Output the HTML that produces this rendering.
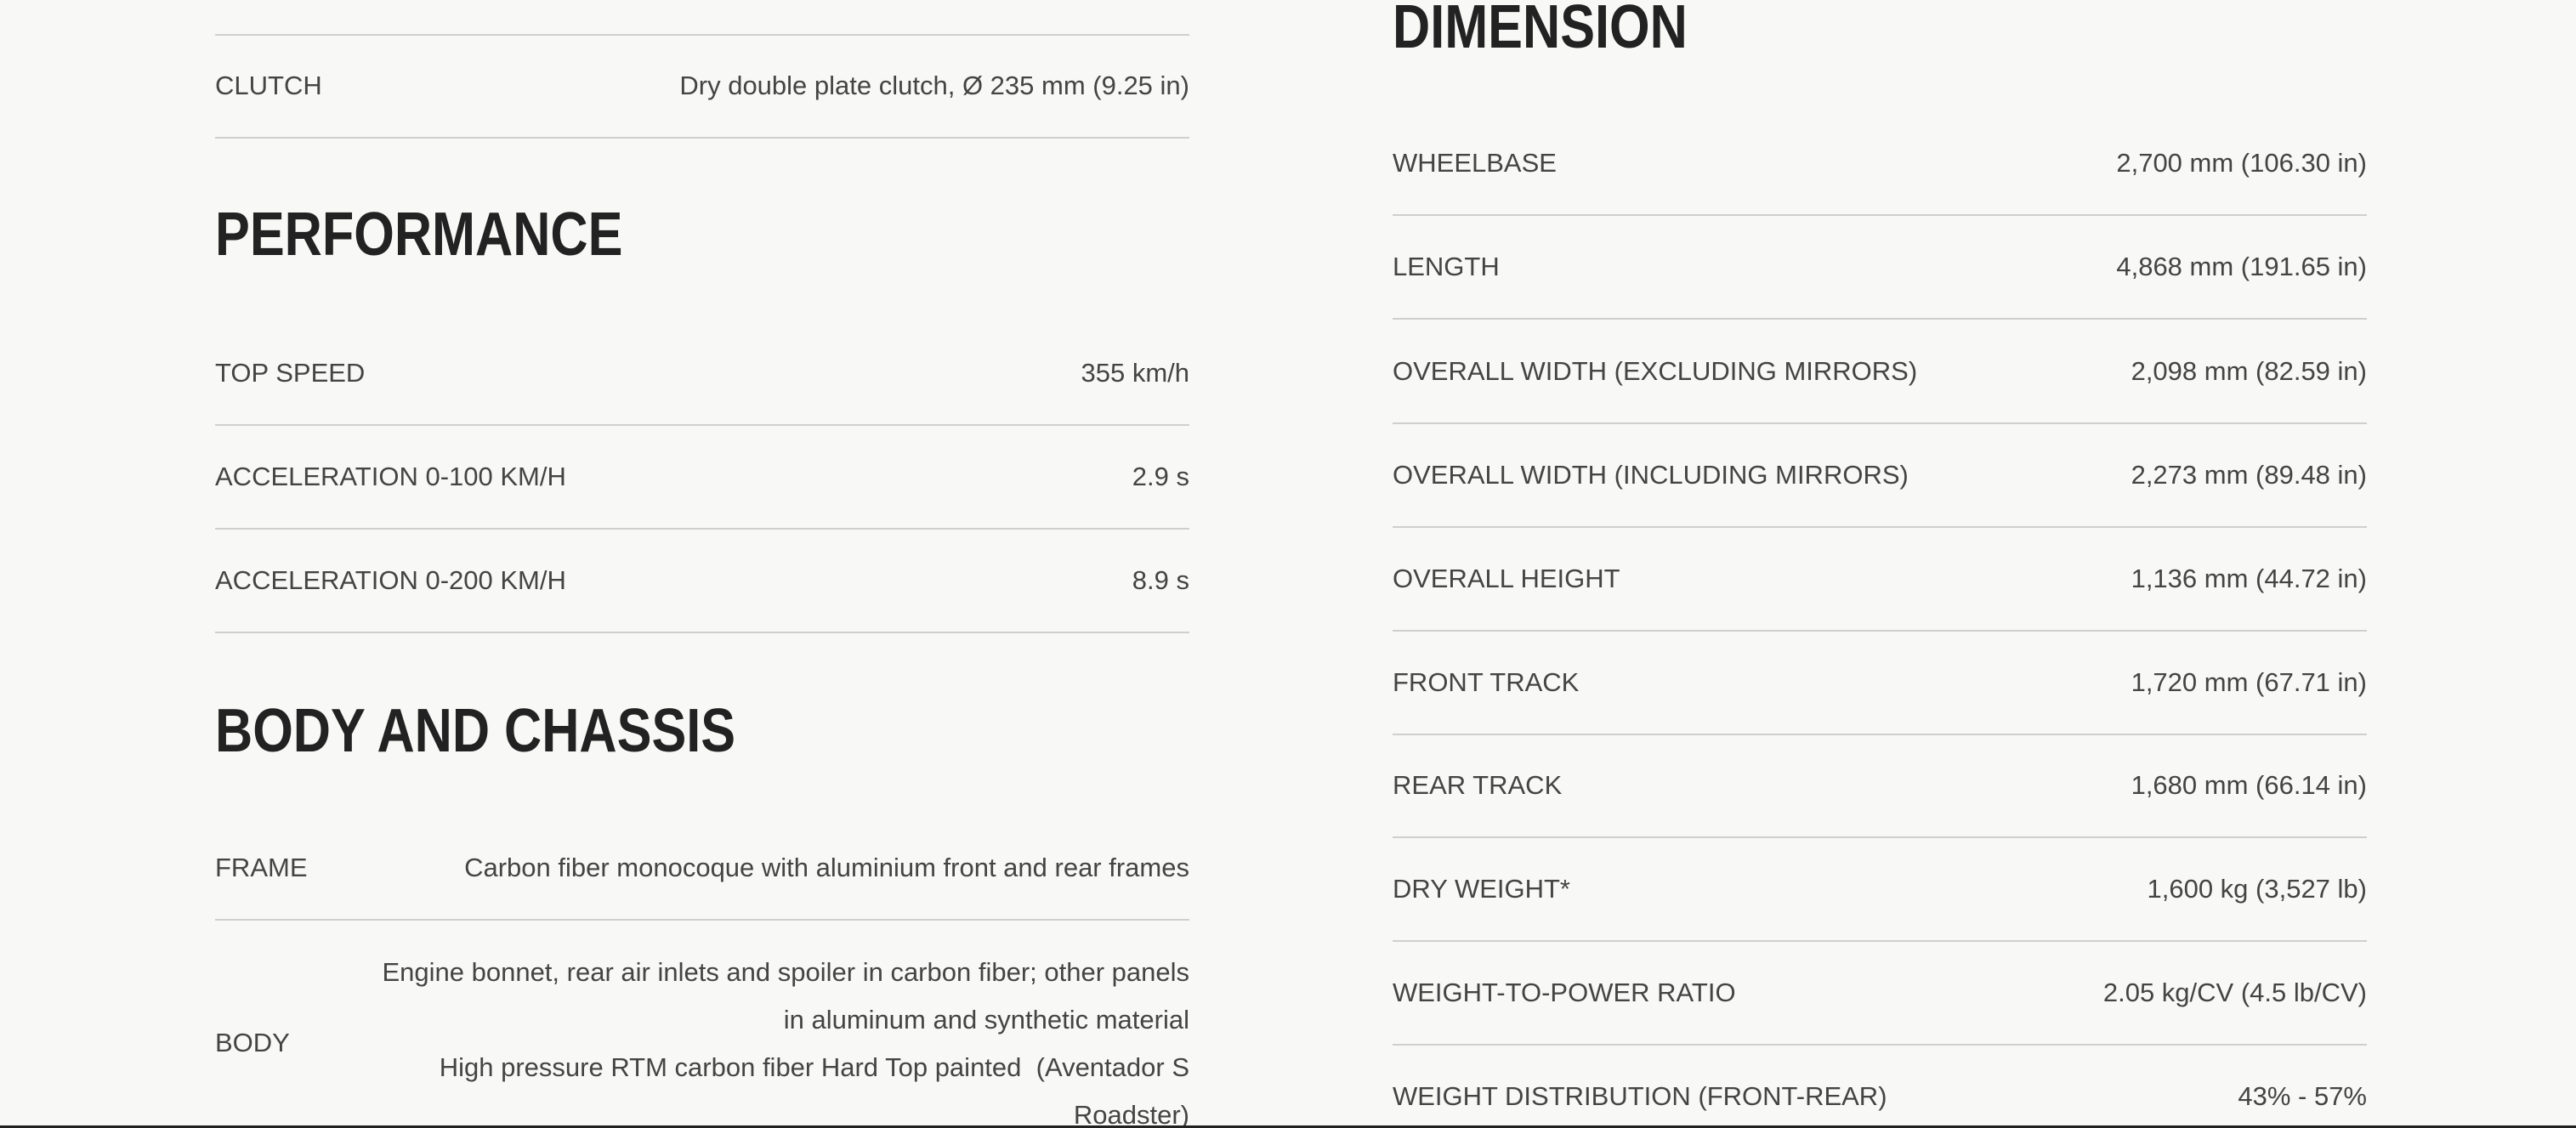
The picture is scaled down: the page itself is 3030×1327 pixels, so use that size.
<!DOCTYPE html>
<html><head><meta charset="utf-8"><style>
html,body{margin:0;padding:0;width:3030px;height:1327px;overflow:hidden;}
body{background:#f8f8f6;position:relative;font-family:"Liberation Sans",sans-serif;color:#444;}
.line{position:absolute;height:2px;background:#cfcfcf;}
.row{position:absolute;height:120px;border-bottom:2px solid #cfcfcf;display:flex;justify-content:space-between;align-items:center;font-size:31px;}
.L{left:253px;width:1146px;}
.R{left:1638px;width:1146px;}
.h{position:absolute;font-weight:bold;font-size:72px;color:#222;line-height:80px;white-space:nowrap;transform:scaleX(.85);transform-origin:left center;}
.v{text-align:right;}
.body{position:absolute;left:253px;width:1146px;top:1102px;height:225px;font-size:31px;overflow:visible;}
.body .lab{position:absolute;left:0;top:108px;line-height:34px;}
.body .val{position:absolute;right:0;top:14px;width:990px;text-align:right;line-height:56px;}
.bot{position:absolute;left:0;width:3030px;top:1324px;height:3px;background:#222;}
</style></head><body>
<div class="line" style="left:253px;width:1146px;top:40px"></div>
<div class="row L" style="top:41px"><span>CLUTCH</span><span class="v">Dry double plate clutch, Ø 235 mm (9.25 in)</span></div>
<div class="h" style="left:253px;top:236px">PERFORMANCE</div>
<div class="row L" style="top:379px"><span>TOP SPEED</span><span class="v">355 km/h</span></div>
<div class="row L" style="top:501px"><span>ACCELERATION 0-100 KM/H</span><span class="v">2.9 s</span></div>
<div class="row L" style="top:623px"><span>ACCELERATION 0-200 KM/H</span><span class="v">8.9 s</span></div>
<div class="h" style="left:253px;top:820px">BODY AND CHASSIS</div>
<div class="row L" style="top:961px"><span>FRAME</span><span class="v">Carbon fiber monocoque with aluminium front and rear frames</span></div>
<div class="body"><div class="lab">BODY</div><div class="val">Engine bonnet, rear air inlets and spoiler in carbon fiber; other panels<br>in aluminum and synthetic material<br>High pressure RTM carbon fiber Hard Top painted&nbsp; (Aventador S<br>Roadster)</div></div>

<div class="h" style="left:1638px;top:-8px">DIMENSION</div>
<div class="row R" style="top:132px"><span>WHEELBASE</span><span class="v">2,700 mm (106.30 in)</span></div>
<div class="row R" style="top:254px"><span>LENGTH</span><span class="v">4,868 mm (191.65 in)</span></div>
<div class="row R" style="top:377px"><span>OVERALL WIDTH (EXCLUDING MIRRORS)</span><span class="v">2,098 mm (82.59 in)</span></div>
<div class="row R" style="top:499px"><span>OVERALL WIDTH (INCLUDING MIRRORS)</span><span class="v">2,273 mm (89.48 in)</span></div>
<div class="row R" style="top:621px"><span>OVERALL HEIGHT</span><span class="v">1,136 mm (44.72 in)</span></div>
<div class="row R" style="top:743px"><span>FRONT TRACK</span><span class="v">1,720 mm (67.71 in)</span></div>
<div class="row R" style="top:864px"><span>REAR TRACK</span><span class="v">1,680 mm (66.14 in)</span></div>
<div class="row R" style="top:986px"><span>DRY WEIGHT*</span><span class="v">1,600 kg (3,527 lb)</span></div>
<div class="row R" style="top:1108px"><span>WEIGHT-TO-POWER RATIO</span><span class="v">2.05 kg/CV (4.5 lb/CV)</span></div>
<div class="row R" style="top:1230px;border-bottom:none"><span>WEIGHT DISTRIBUTION (FRONT-REAR)</span><span class="v">43% - 57%</span></div>
<div class="bot"></div>
</body></html>
